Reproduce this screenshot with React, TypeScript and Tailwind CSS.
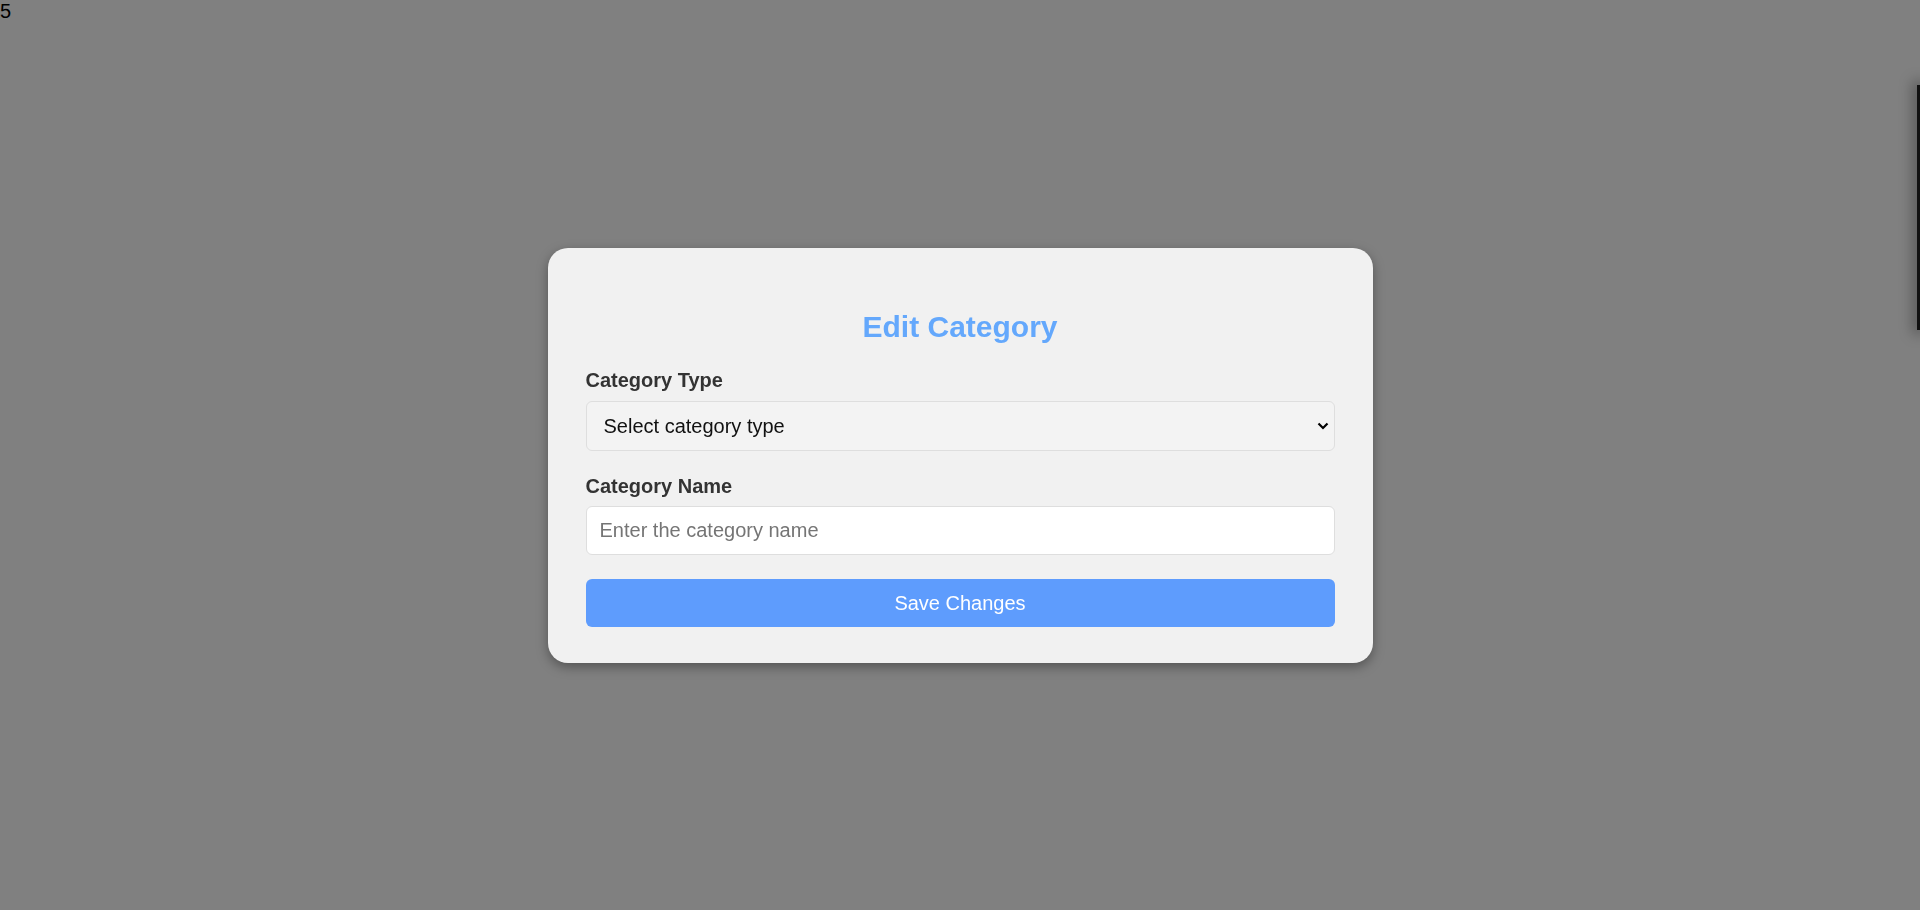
import React from "react";

export default function App() {
  return (
    <div
      className="relative h-[910px] w-full overflow-hidden bg-[#808080] text-black"
      style={{ fontFamily: '"Liberation Sans", Arial, sans-serif' }}
    >
      <div className="text-[20px] leading-[23px]">5</div>

      {/* off-canvas panel edge */}
      <div className="absolute right-[-1px] top-[85px] h-[245px] w-[4px] bg-[#111] shadow-[0_0_14px_4px_rgba(0,0,0,0.35)]" />

      <div className="fixed inset-0 flex items-center justify-center">
        <div className="w-[825px] rounded-[20px] bg-[#f1f1f1] px-[38px] pb-[36px] pt-[62px] shadow-[0_4px_12px_rgba(0,0,0,0.35)]">
          <h2 className="text-center text-[30px] font-bold leading-[33px] text-[#64a8fc]">
            Edit Category
          </h2>

          <label className="mt-[26px] mb-[9px] block text-[20px] font-bold leading-[23px] text-[#333]">
            Category Type
          </label>
          <div className="relative">
            <select
              defaultValue=""
              className="block h-[50px] w-full appearance-none rounded-[6px] border border-[#dedede] bg-[#f3f3f3] pl-[17px] pr-[40px] text-[20px] text-[#111] outline-none"
              style={{ fontFamily: '"Liberation Sans", Arial, sans-serif' }}
            >
              <option value="">Select category type</option>
            </select>
            <svg
              className="pointer-events-none absolute right-[6px] top-[21px]"
              width="12"
              height="8"
              viewBox="0 0 12 8"
            >
              <path d="M1.5 1.5 L6 6 L10.5 1.5" fill="none" stroke="#000" strokeWidth="2.2" />
            </svg>
          </div>

          <label className="mt-[24px] mb-[8px] block text-[20px] font-bold leading-[23px] text-[#333]">
            Category Name
          </label>
          <input
            type="text"
            placeholder="Enter the category name"
            className="block h-[49px] w-full rounded-[6px] border border-[#dedede] bg-white px-[13px] text-[20px] text-[#111] outline-none placeholder:text-[#757575]"
            style={{ fontFamily: '"Liberation Sans", Arial, sans-serif' }}
          />

          <button
            className="mt-[24px] block h-[48px] w-full rounded-[6px] bg-[#5e9cfd] text-[20px] text-white"
            style={{ fontFamily: '"Liberation Sans", Arial, sans-serif' }}
          >
            Save Changes
          </button>
        </div>
      </div>
    </div>
  );
}
